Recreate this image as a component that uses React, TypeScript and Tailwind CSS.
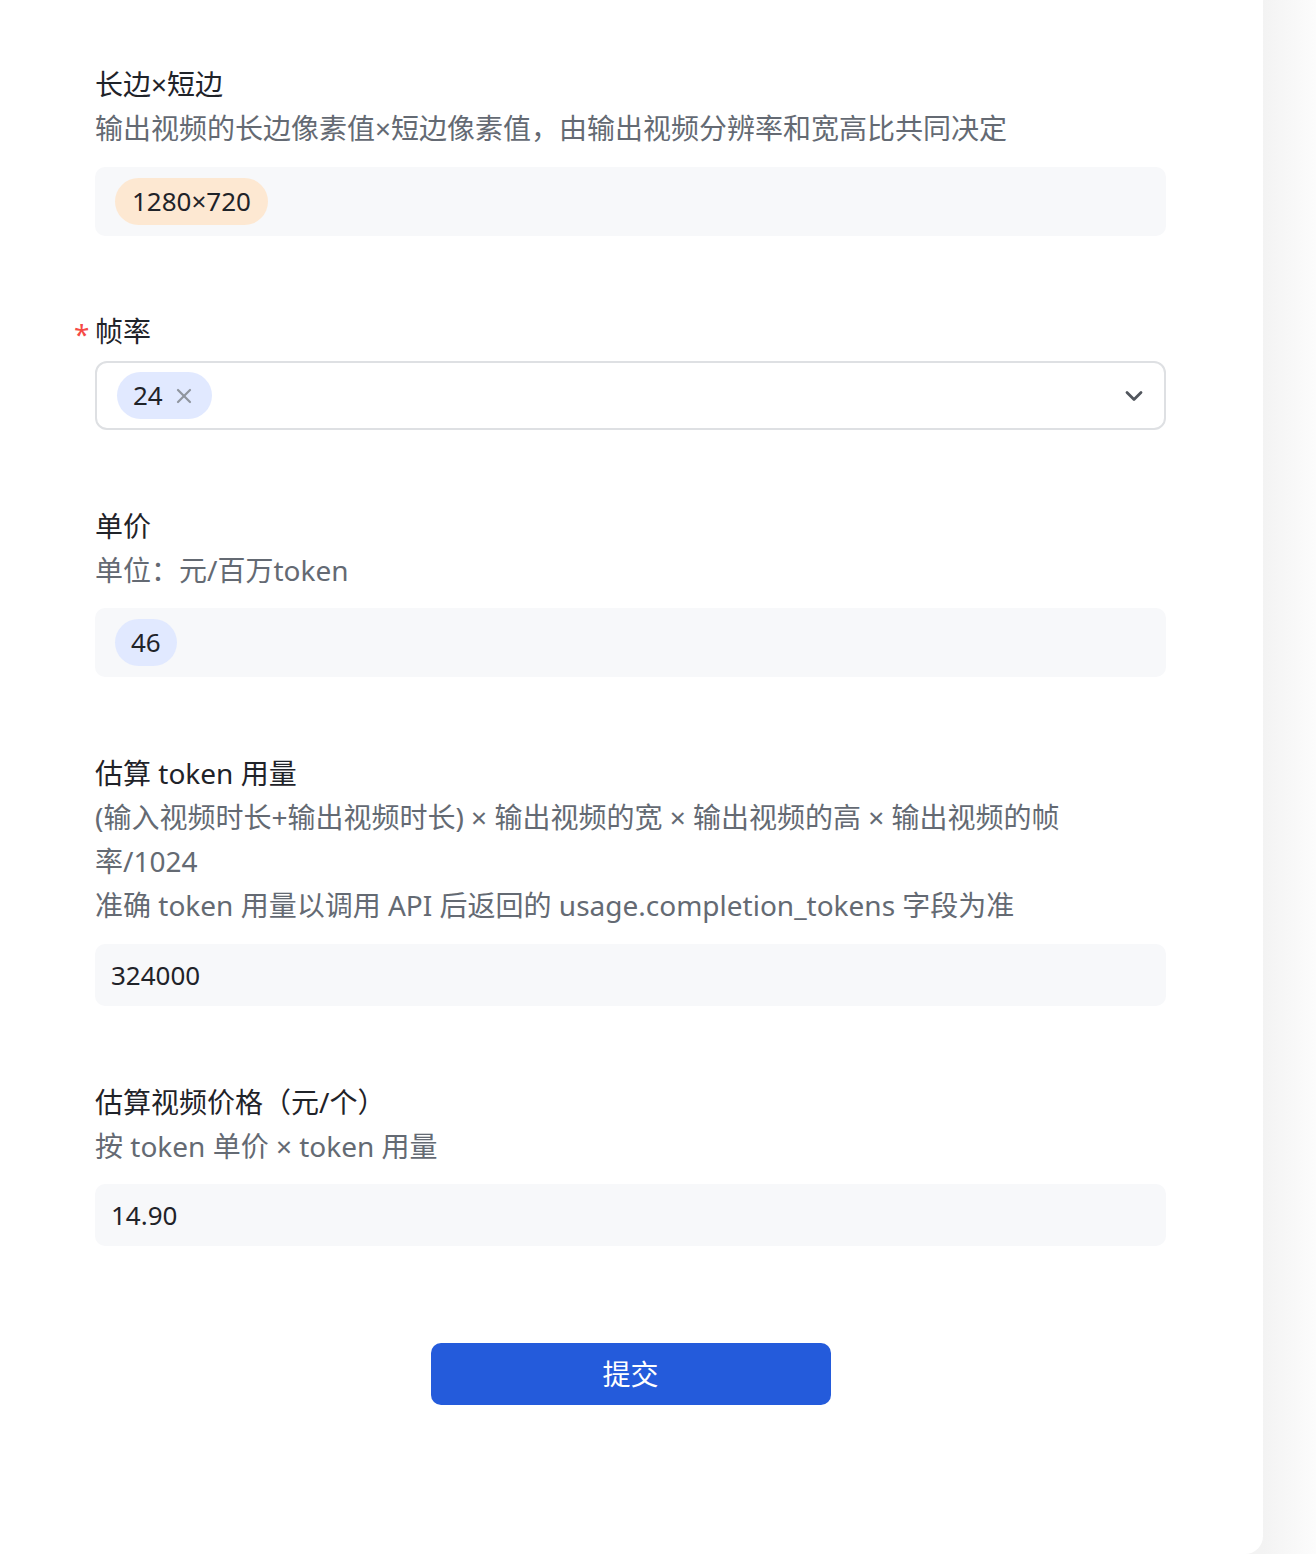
import { ChevronDown, X } from 'lucide-react'

const font = { fontFamily: '"Noto Sans", "Noto Sans CJK SC", sans-serif' }

function Label({ text, required }: { text: string; required?: boolean }) {
  return (
    <div className="flex items-center text-[28px] leading-[44px] text-[#1f2329]">
      {required && <span className="-ml-[21px] w-[21px] text-[28px] leading-none pt-[6px] text-[#f54a45]">*</span>}
      {text}
    </div>
  )
}

function Desc({ children }: { children: React.ReactNode }) {
  return <div className="text-[28px] leading-[44px] text-[#646a73]">{children}</div>
}

export default function App() {
  return (
    <div className="flex min-h-[1554px] bg-[#f3f3f3]" style={font}>
      {/* form card */}
      <div className="w-[1263px] h-[1554px] bg-white rounded-br-[18px] pt-[62px] pl-[95px] pr-[97px]">
        <div className="flex flex-col">
          {/* resolution */}
          <Label text="长边×短边" />
          <Desc>输出视频的长边像素值×短边像素值，由输出视频分辨率和宽高比共同决定</Desc>
          <div className="mt-[17px] h-[69px] rounded-[10px] bg-[#f7f8fa] flex items-center px-[20px]">
            <span className="h-[47px] px-[17px] rounded-full bg-[#fde8d2] flex items-center text-[26px] text-[#1f2329]">
              1280×720
            </span>
          </div>

          {/* frame rate */}
          <div className="mt-[73px]">
            <Label text="帧率" required />
          </div>
          <div className="mt-[8px] h-[69px] rounded-[12px] border-2 border-[#dee0e3] flex items-center justify-between pl-[20px] pr-[16px]">
            <span className="h-[47px] pl-[16px] pr-[16px] rounded-full bg-[#e1e9ff] flex items-center gap-[9px] text-[26px] text-[#1f2329]">
              24
              <X className="w-[24px] h-[24px] text-[#8f959e]" strokeWidth={2.2} />
            </span>
            <ChevronDown className="w-[28px] h-[28px] text-[#51565d]" strokeWidth={2.4} />
          </div>

          {/* unit price */}
          <div className="mt-[74px]">
            <Label text="单价" />
          </div>
          <Desc>单位：元/百万token</Desc>
          <div className="mt-[16px] h-[69px] rounded-[10px] bg-[#f7f8fa] flex items-center px-[20px]">
            <span className="h-[47px] px-[16px] rounded-full bg-[#e1e9ff] flex items-center text-[26px] text-[#1f2329]">
              46
            </span>
          </div>

          {/* token usage */}
          <div className="mt-[74px]">
            <Label text="估算 token 用量" />
          </div>
          <Desc>
            (输入视频时长+输出视频时长) × 输出视频的宽 × 输出视频的高 × 输出视频的帧
            <br />
            率/1024
            <br />
            准确 token 用量以调用 API 后返回的 usage.completion_tokens 字段为准
          </Desc>
          <div className="mt-[17px] h-[62px] rounded-[10px] bg-[#f7f8fa] flex items-center px-[16px] text-[26px] text-[#1f2329]">
            324000
          </div>

          {/* video price */}
          <div className="mt-[74px]">
            <Label text="估算视频价格（元/个）" />
          </div>
          <Desc>按 token 单价 × token 用量</Desc>
          <div className="mt-[16px] h-[62px] rounded-[10px] bg-[#f7f8fa] flex items-center px-[16px] text-[26px] text-[#1f2329]">
            14.90
          </div>

          <div className="mt-[97px] flex justify-center">
            <button className="w-[400px] h-[62px] rounded-[10px] bg-[#245bdb] text-white text-[28px]">提交</button>
          </div>
        </div>
      </div>

      {/* side gutter */}
      <div className="flex-1 bg-gradient-to-r from-[#f3f3f3] to-[#fcfcfc]" />
    </div>
  )
}
